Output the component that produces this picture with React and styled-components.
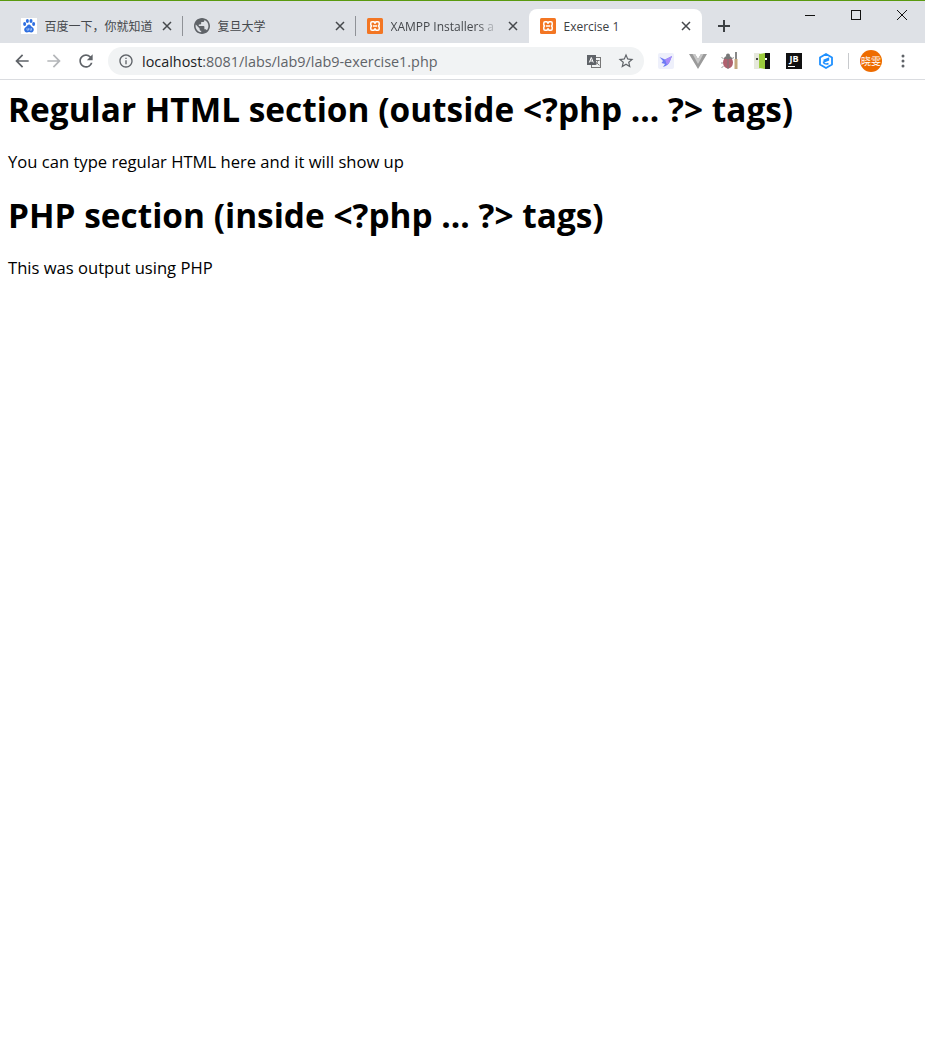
import styled, { createGlobalStyle } from "styled-components";

const GlobalStyle = createGlobalStyle`
  html, body {
    margin: 0;
    padding: 0;
    background: #fff;
  }
  body {
    font-family: "Open Sans", "Noto Sans CJK SC", sans-serif;
    color: #000;
  }
`;

const Page = styled.div`
  width: 925px;
  height: 1060px;
  overflow: hidden;
  background: #fff;
`;

const TabStrip = styled.div`
  height: 34px;
  padding: 8px 0 0 9.5px;
  display: flex;
  align-items: stretch;
  background: #dee1e6;
  border-top: 1px solid #5a9a10;
`;

const Tab = styled.div`
  position: relative;
  width: 173px;
  flex: none;
  display: flex;
  align-items: center;
  padding: 0 9px 0 11px;
  box-sizing: border-box;
  border-radius: 8px 8px 0 0;
  background: ${(p) => (p.$active ? "#fff" : "transparent")};
  color: ${(p) => (p.$active ? "#3c4043" : "#45484c")};
  font-size: 12px;

  &::after {
    content: "";
    display: ${(p) => (p.$divider ? "block" : "none")};
    position: absolute;
    right: 0;
    top: 7px;
    height: 20px;
    width: 1px;
    background: #8f9297;
  }
`;

const Favicon = styled.svg`
  width: 16px;
  height: 16px;
  flex: none;
  margin-right: 8px;
`;

const TabTitle = styled.span`
  flex: 1;
  min-width: 0;
  overflow: hidden;
  white-space: nowrap;
  ${(p) =>
    p.$fade &&
    "mask-image: linear-gradient(to right, #000 80%, transparent 100%);"}
`;

const CloseIcon = styled.svg`
  width: 10px;
  height: 10px;
  flex: none;
  margin-left: 9px;
  margin-right: 1.5px;
`;

const NewTab = styled.svg`
  width: 14px;
  height: 14px;
  flex: none;
  margin: 10px 0 0 15px;
`;

const WindowControls = styled.div`
  margin-left: auto;
  margin-top: -8px;
  display: flex;
`;

const WindowButton = styled.div`
  width: 46px;
  height: 28px;
  display: flex;
  align-items: center;
  justify-content: center;
`;

const Toolbar = styled.div`
  height: 36px;
  padding-left: 6px;
  display: flex;
  align-items: center;
  background: #fff;
  border-bottom: 1px solid #dadce0;
`;

const IconButton = styled.div`
  width: 32px;
  height: 32px;
  flex: none;
  display: flex;
  align-items: center;
  justify-content: center;
`;

const Omnibox = styled.div`
  width: 536px;
  height: 28px;
  margin: 0 6px;
  padding: 0 2px;
  box-sizing: border-box;
  flex: none;
  display: flex;
  align-items: center;
  border-radius: 14px;
  background: #f1f3f4;
`;

const InfoSlot = styled.div`
  width: 32px;
  flex: none;
  display: flex;
  justify-content: center;
`;

const Url = styled.div`
  flex: 1;
  font-size: 14.4px;
  color: #5f6368;
  white-space: nowrap;

  b {
    font-weight: 400;
    color: #202124;
  }
`;

const ToolbarDivider = styled.div`
  width: 1px;
  height: 16px;
  margin: 0 6px;
  flex: none;
  background: #c8cacd;
`;

const JbBadge = styled.div`
  width: 16px;
  height: 16px;
  background: #111;
  color: #fff;
  font-size: 9px;
  font-weight: 700;
  line-height: 11px;
  text-align: center;
  position: relative;

  &::after {
    content: "";
    position: absolute;
    left: 2px;
    bottom: 2px;
    width: 7px;
    height: 1px;
    background: #fff;
  }
`;

const Avatar = styled.div`
  width: 22px;
  height: 22px;
  border-radius: 50%;
  background: #ee6c00;
  color: #fff;
  font-size: 10px;
  line-height: 22px;
  text-align: center;
  white-space: nowrap;
`;

const Content = styled.main`
  padding: 7px 8px 8px;
`;

const Heading = styled.h1`
  margin: 0;
  font-size: 33.4px;
  font-weight: 700;
  line-height: 44px;
`;

const Paragraph = styled.p`
  margin: 20px 0 21px;
  font-size: 16.6px;
  line-height: 21px;
`;

const Glyph = ({ d, size = 20, color = "#5f6368" }) => (
  <svg width={size} height={size} viewBox="0 0 24 24">
    <path d={d} fill={color} />
  </svg>
);

const BaiduIcon = () => (
  <Favicon viewBox="0 0 16 16">
    <rect width="16" height="16" fill="#fff" />
    <g fill="#2f6fe0">
      <ellipse cx="3.6" cy="6" rx="1.5" ry="1.9" />
      <ellipse cx="6.4" cy="3" rx="1.5" ry="1.9" />
      <ellipse cx="10" cy="3" rx="1.5" ry="1.9" />
      <ellipse cx="12.6" cy="6" rx="1.5" ry="1.9" />
      <path d="M8 6.400c-1.600 0-2.200 2-3.800 3.200-1.600 1.200-1.400 4.800 1.600 4.800 1 0 1.500-.300 2.200-.300s1.400.300 2.300.300c3 0 3-3.600 1.500-4.800C10.200 8.400 9.600 6.400 8 6.400z" />
    </g>
    <path d="M6 10.200v2h1.500v-2M9 10.200v2h1.500v-2" stroke="#bcd4fb" strokeWidth=".7" fill="none" />
  </Favicon>
);

const GlobeIcon = () => (
  <Favicon viewBox="2 2 20 20">
    <path
      fill="#5f6368"
      d="M12 2C6.480 2 2 6.480 2 12s4.480 10 10 10 10-4.480 10-10S17.520 2 12 2zm-1 17.930c-3.950-.490-7-3.850-7-7.930 0-.620.080-1.210.210-1.790L9 15v1c0 1.100.900 2 2 2v1.930zm6.900-2.540c-.260-.810-1-1.390-1.900-1.390h-1v-3c0-.550-.450-1-1-1H8v-2h2c.550 0 1-.450 1-1V7h2c1.100 0 2-.900 2-2v-.410c2.930 1.190 5 4.060 5 7.410 0 2.080-.800 3.970-2.100 5.390z"
    />
  </Favicon>
);

const XamppIcon = () => (
  <Favicon viewBox="0 0 16 16">
    <rect width="16" height="16" rx="1.500" fill="#f37623" />
    <path
      d="M5 3.800h2l1 1.400 1-1.400h2a1.200 1.200 0 0 1 1.200 1.200v2L11.400 8l.800 1v2a1.200 1.200 0 0 1-1.200 1.200H9l-1-1.400-1 1.400H5A1.200 1.200 0 0 1 3.800 11V9l.800-1-.800-1V5A1.200 1.200 0 0 1 5 3.800zM6 8h4"
      fill="none"
      stroke="#fff"
      strokeWidth="1.500"
      strokeLinejoin="round"
    />
  </Favicon>
);

const TabClose = () => (
  <CloseIcon viewBox="0 0 10 10">
    <path d="M1 1l8 8M9 1l-8 8" stroke="#45484c" strokeWidth="1.500" />
  </CloseIcon>
);

const tabs = [
  { title: "百度一下，你就知道", icon: <BaiduIcon />, divider: true },
  { title: "复旦大学", icon: <GlobeIcon />, divider: true },
  { title: "XAMPP Installers a", icon: <XamppIcon />, fade: true },
  { title: "Exercise 1", icon: <XamppIcon />, active: true },
];

export default function App() {
  return (
    <Page>
      <GlobalStyle />
      <TabStrip>
        {tabs.map((tab) => (
          <Tab key={tab.title} $active={tab.active} $divider={tab.divider}>
            {tab.icon}
            <TabTitle $fade={tab.fade}>{tab.title}</TabTitle>
            <TabClose />
          </Tab>
        ))}
        <NewTab viewBox="0 0 14 14">
          <path d="M7 1v12M1 7h12" stroke="#3c4043" strokeWidth="2" />
        </NewTab>
        <WindowControls>
          <WindowButton>
            <svg width="10" height="10" viewBox="0 0 10 10">
              <path d="M0 5.500h10" stroke="#111" />
            </svg>
          </WindowButton>
          <WindowButton>
            <svg width="10" height="10" viewBox="0 0 10 10">
              <rect x=".5" y=".5" width="9" height="9" fill="none" stroke="#111" />
            </svg>
          </WindowButton>
          <WindowButton>
            <svg width="10" height="10" viewBox="0 0 10 10">
              <path d="M0 0l10 10M10 0L0 10" stroke="#111" />
            </svg>
          </WindowButton>
        </WindowControls>
      </TabStrip>

      <Toolbar>
        <IconButton>
          <Glyph d="M20 11H7.830l5.590-5.590L12 4l-8 8 8 8 1.410-1.410L7.830 13H20v-2z" />
        </IconButton>
        <IconButton>
          <Glyph
            color="#b4b6b9"
            d="M4 11h12.170l-5.590-5.590L12 4l8 8-8 8-1.410-1.410L16.170 13H4v-2z"
          />
        </IconButton>
        <IconButton>
          <Glyph d="M17.650 6.350A7.958 7.958 0 0 0 12 4c-4.420 0-7.990 3.580-7.990 8s3.570 8 7.990 8c3.730 0 6.840-2.550 7.730-6h-2.080A5.990 5.990 0 0 1 12 18c-3.310 0-6-2.690-6-6s2.690-6 6-6c1.660 0 3.140.690 4.220 1.780L13 11h7V4l-2.350 2.350z" />
        </IconButton>
        <Omnibox>
          <InfoSlot>
            <Glyph
              size={16}
              d="M11 7h2v2h-2zm0 4h2v6h-2zm1-9C6.480 2 2 6.480 2 12s4.480 10 10 10 10-4.480 10-10S17.520 2 12 2zm0 18c-4.410 0-8-3.590-8-8s3.590-8 8-8 8 3.590 8 8-3.590 8-8 8z"
            />
          </InfoSlot>
          <Url>
            <b>localhost</b>:8081/labs/lab9/lab9-exercise1.php
          </Url>
          <IconButton>
            <svg width="16" height="16" viewBox="0 0 16 16">
              <rect x="5.500" y="4.500" width="9" height="10" fill="#f1f3f4" stroke="#777" />
              <rect x="1" y="2" width="9" height="10" fill="#5f6368" />
              <path d="M3.300 9.500l2-5 2 5M4 8h2.600" fill="none" stroke="#fff" />
              <path d="M9.500 7.500h4M11.500 7.500c0 2-1 3.500-2 4.500M10.500 9.500c.800 1.200 2 2.200 3 2.800" fill="none" stroke="#777" />
            </svg>
          </IconButton>
          <IconButton>
            <Glyph
              size={18}
              d="M22 9.240l-7.190-.620L12 2 9.190 8.630 2 9.240l5.460 4.730L5.820 21 12 17.270 18.180 21l-1.630-7.030L22 9.240zM12 15.400l-3.760 2.270 1-4.280-3.320-2.880 4.380-.380L12 6.100l1.710 4.040 4.380.380-3.320 2.880 1 4.280L12 15.400z"
            />
          </IconButton>
        </Omnibox>

        <IconButton>
          <svg width="16" height="16" viewBox="0 0 16 16">
            <rect width="16" height="16" rx="2" fill="#eef0fb" />
            <path d="M1.500 4l5.500 2.500L14 3l-2 5c-1 3-3 5-7 6l2-3-3.500-1L5 8z" fill="#6d7bf5" />
            <path d="M7 6.500L14 3l-2 5c-.600 1.800-1.600 3-3 4z" fill="#a88bf8" />
          </svg>
        </IconButton>
        <IconButton>
          <svg width="18" height="16" viewBox="0 0 18 16">
            <path d="M0 1h6l3 5 3-5h6L9 16z" fill="#9a9a9a" />
            <path d="M6 1l3 5 3-5h2.500L9 11 3.500 1z" fill="#c8c8c8" />
          </svg>
        </IconButton>
        <IconButton>
          <svg width="18" height="18" viewBox="0 0 18 18">
            <ellipse cx="7" cy="10.500" rx="5" ry="6" fill="#b0606e" />
            <path d="M7 5v12" stroke="#777" />
            <path d="M3 7a4 3 0 0 1 8 0z" fill="#777" />
            <circle cx="7" cy="3.500" r="2" fill="#777" />
            <path d="M2.500 7L.5 5M2 11H0M2.500 14l-2 2M11.500 7l1-2" stroke="#999" />
            <rect x="14" y="0" width="2" height="7" fill="#888" />
            <rect x="13.500" y="7" width="3" height="10" fill="#c3a77d" />
          </svg>
        </IconButton>
        <IconButton>
          <svg width="16" height="16" viewBox="0 0 16 16">
            <rect width="6" height="16" y="0" fill="#e6e8dc" />
            <path d="M5 1l6-1v16l-6-1z" fill="#9ccc3c" />
            <rect x="11" width="5" height="16" fill="#111" />
            <rect x="2" y="5" width="2" height="2" fill="#444" />
            <rect x="11" y="5" width="2" height="2" fill="#fff" />
          </svg>
        </IconButton>
        <IconButton>
          <JbBadge>JB</JbBadge>
        </IconButton>
        <IconButton>
          <svg width="16" height="16" viewBox="0 0 16 16">
            <path d="M8 1l6 3.500v7L8 15l-6-3.500v-7z" fill="none" stroke="#1e90ff" strokeWidth="1.800" strokeLinejoin="round" />
            <path d="M5.500 7.500l5-2.200v1.700l-5 2.200c.500 1.800 3 2.200 5 1.300" fill="none" stroke="#1e90ff" strokeWidth="1.400" />
          </svg>
        </IconButton>
        <ToolbarDivider />
        <IconButton>
          <Avatar>晓雯</Avatar>
        </IconButton>
        <IconButton>
          <svg width="4" height="14" viewBox="0 0 4 14">
            <circle cx="2" cy="2" r="1.500" fill="#5f6368" />
            <circle cx="2" cy="7" r="1.500" fill="#5f6368" />
            <circle cx="2" cy="12" r="1.500" fill="#5f6368" />
          </svg>
        </IconButton>
      </Toolbar>

      <Content>
        <Heading>Regular HTML section (outside &lt;?php ... ?&gt; tags)</Heading>
        <Paragraph>You can type regular HTML here and it will show up</Paragraph>
        <Heading>PHP section (inside &lt;?php ... ?&gt; tags)</Heading>
        <Paragraph>This was output using PHP</Paragraph>
      </Content>
    </Page>
  );
}
